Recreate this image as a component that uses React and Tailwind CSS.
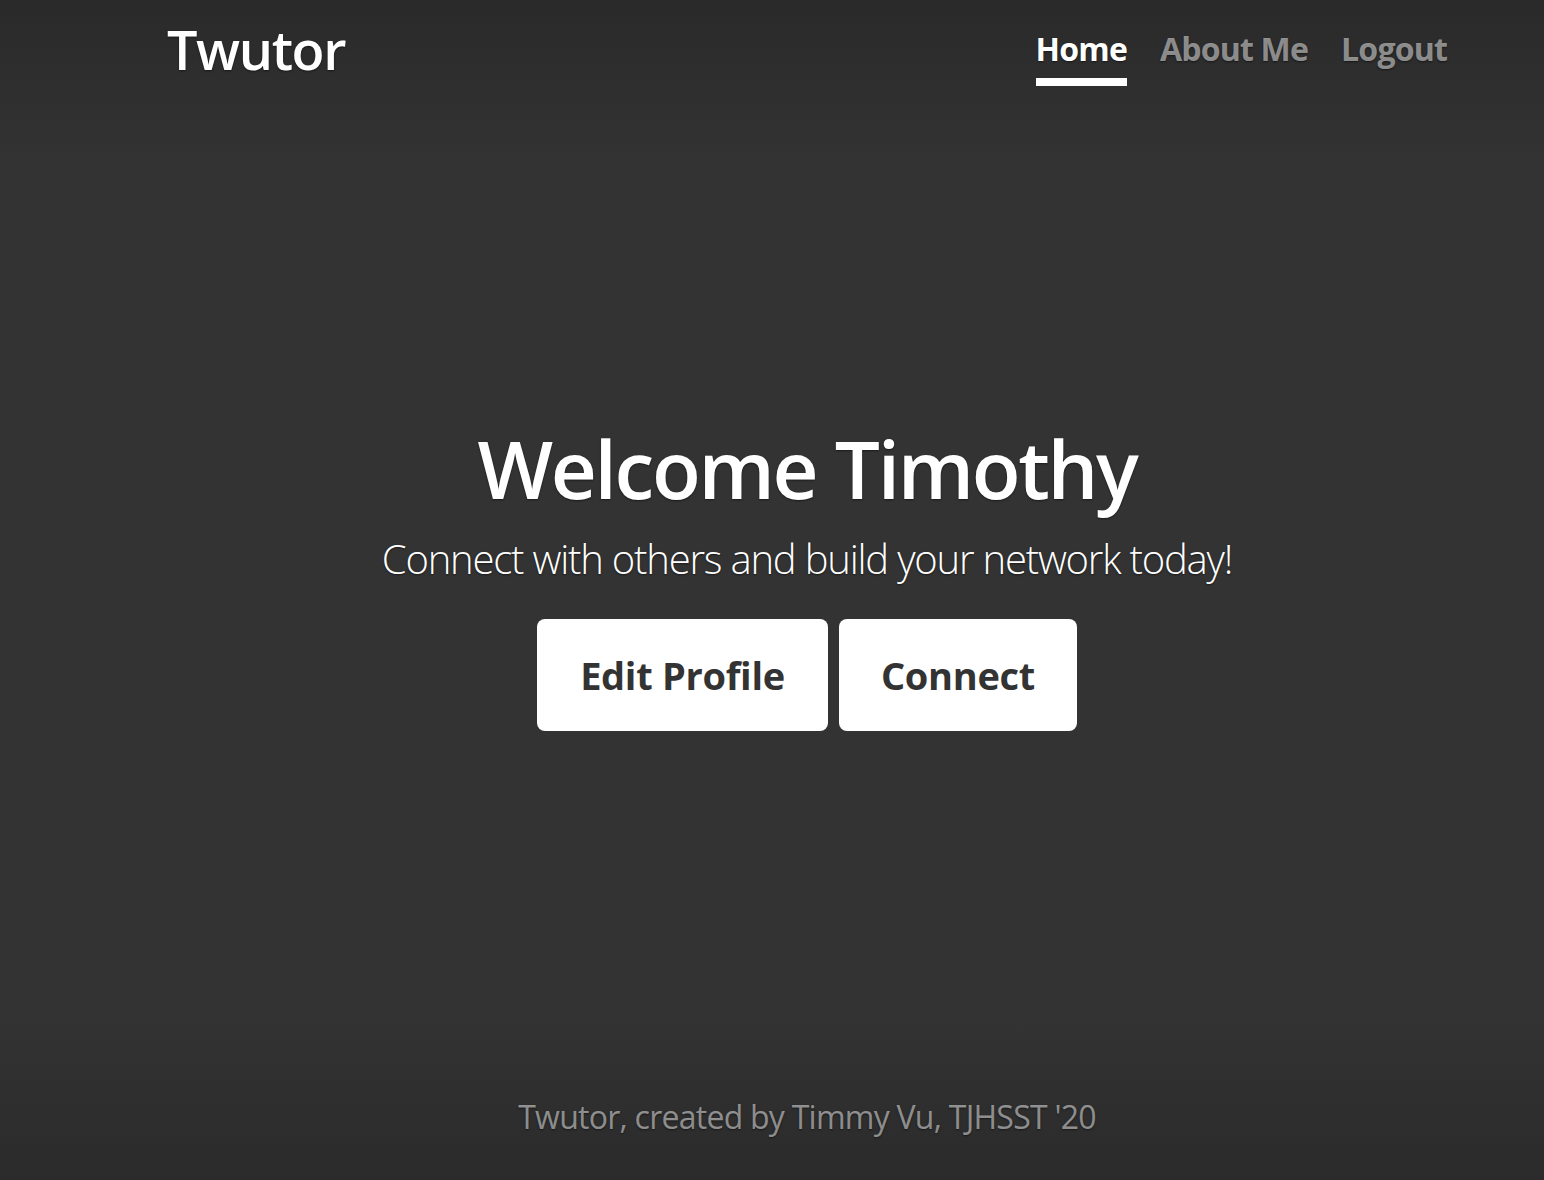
import React from 'react';

const shadow = '[text-shadow:0_1px_2px_rgba(0,0,0,0.5)]';

export default function App() {
  return (
    <div
      className="h-[1180px] w-full bg-[linear-gradient(to_bottom,#2a2a2a_0px,#333333_170px,#333333_1010px,#2b2b2b_1180px)] text-white flex flex-col font-['Open_Sans',sans-serif]"
    >
      {/* Header */}
      <header className="flex items-start justify-between pl-[167px] pr-[97px] pt-[14px]">
        <div className={`text-[54px] font-semibold leading-[1.3] tracking-[-1.4px] ${shadow}`}>Twutor</div>
        <nav className="flex gap-[33px] pt-[17px]">
          <a className={`text-[32px] font-bold leading-[1.1] tracking-[-0.8px] border-b-[8px] border-white pb-[12px] text-white ${shadow}`}>Home</a>
          <a className={`text-[32px] font-bold leading-[1.1] tracking-[-0.8px] text-white/50 ${shadow}`}>About Me</a>
          <a className={`text-[32px] font-bold leading-[1.1] tracking-[-0.8px] text-white/50 ${shadow}`}>Logout</a>
        </nav>
      </header>

      {/* Main */}
      <main className="flex-1 flex flex-col items-center justify-center pl-[167px] pr-[97px] pb-[28px]">
        <h1 className={`text-[80px] font-semibold leading-[1.2] tracking-[-2.3px] ${shadow}`}>Welcome Timothy</h1>
        <p className={`text-[40px] font-light leading-[1.5] tracking-[-1.2px] mt-[13px] ${shadow}`}>
          Connect with others and build your network today!
        </p>
        <div className="flex gap-[11px] mt-[30px]">
          <button className="h-[112px] w-[291px] rounded-[8px] bg-white text-[#333333] text-[38px] font-bold tracking-[-0.3px]">
            Edit Profile
          </button>
          <button className="h-[112px] w-[238px] rounded-[8px] bg-white text-[#333333] text-[38px] font-bold tracking-[-0.3px]">
            Connect
          </button>
        </div>
      </main>

      {/* Footer */}
      <footer className="flex justify-center pl-[167px] pr-[97px] pb-[39px]">
        <p className={`text-[32px] leading-[1.5] tracking-[-0.75px] text-white/50 ${shadow}`}>
          Twutor, created by Timmy Vu, TJHSST '20
        </p>
      </footer>
    </div>
  );
}
